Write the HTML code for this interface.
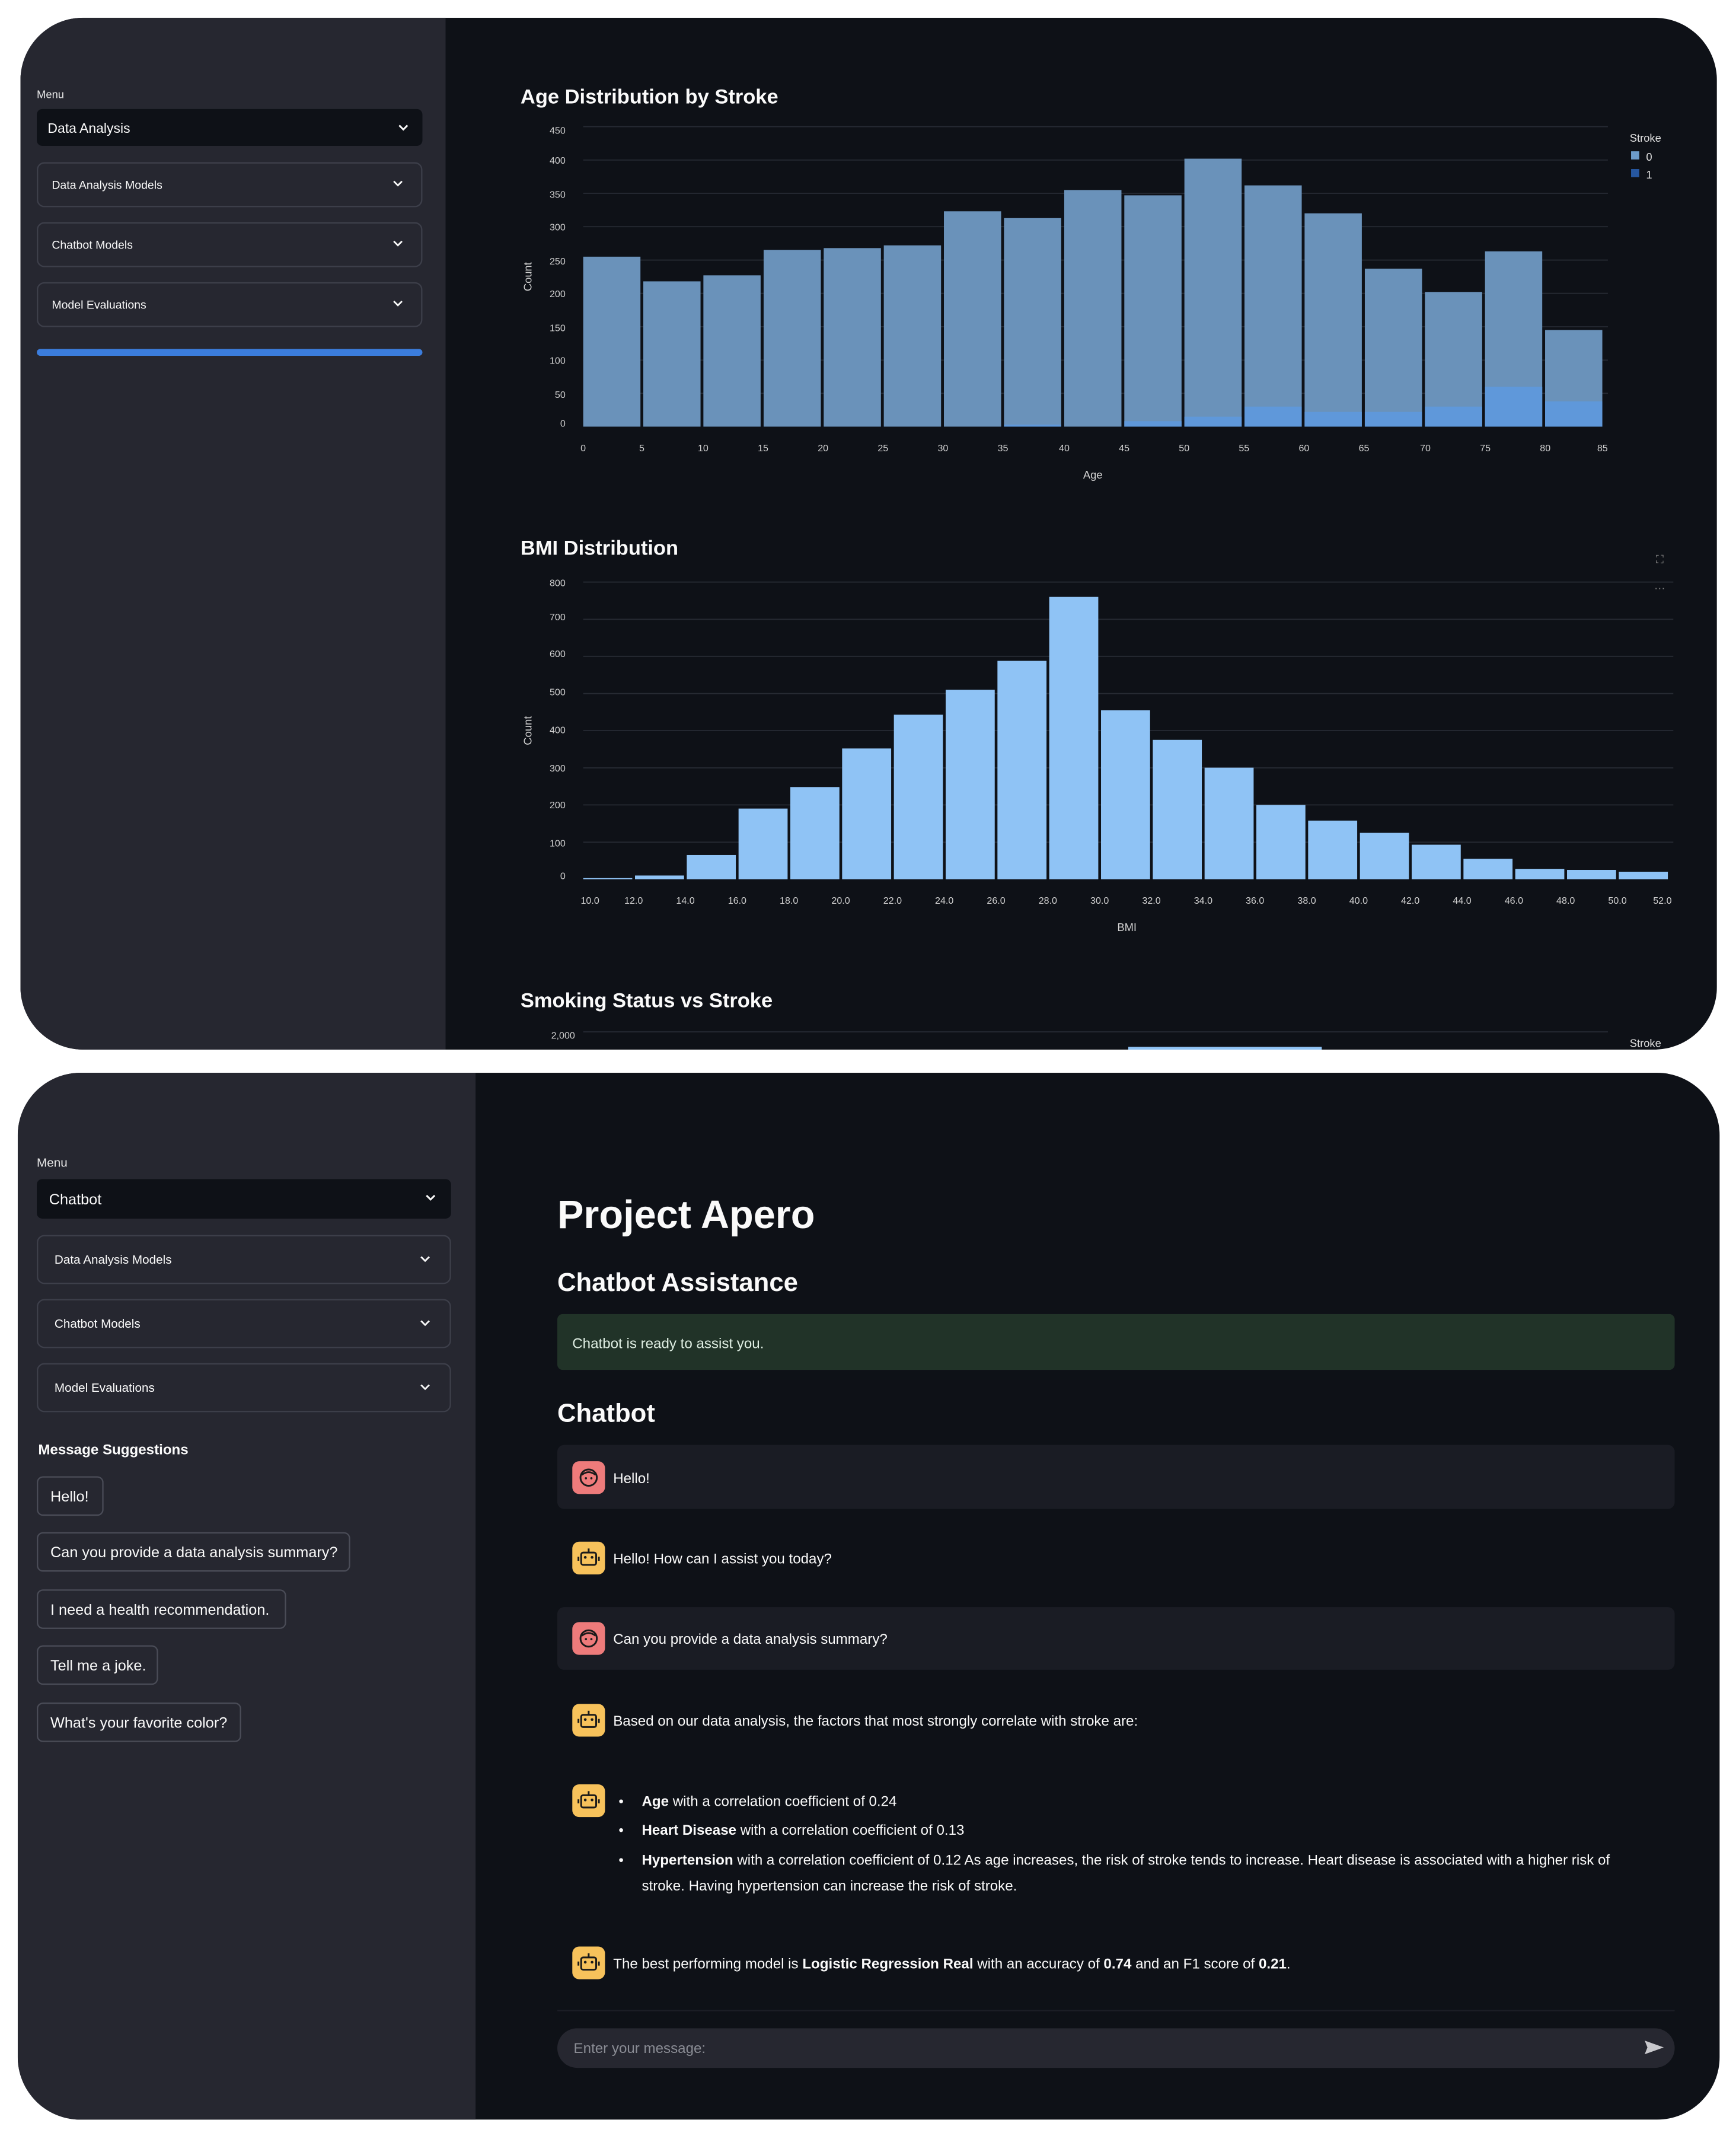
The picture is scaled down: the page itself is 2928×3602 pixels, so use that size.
<!DOCTYPE html>
<html><head><meta charset="utf-8"><style>
html,body{margin:0;padding:0;background:#fff;width:2928px;height:3602px;overflow:hidden}
svg{display:block}
text{font-family:"Liberation Sans",sans-serif}
</style></head><body>
<svg width="2928" height="3602" viewBox="0 0 1274 1567" preserveAspectRatio="none" xmlns="http://www.w3.org/2000/svg">
<defs>
<clipPath id="c1"><rect x="15" y="13" width="1245" height="757" rx="46"/></clipPath>
<clipPath id="c2"><rect x="13" y="787" width="1249" height="768" rx="46"/></clipPath>
</defs>
<rect width="1274" height="1567" fill="#fff"/>
<!-- PANEL 1 -->
<g clip-path="url(#c1)">
<rect x="15" y="13" width="1245" height="757" fill="#0e1117"/>
<rect x="15" y="13" width="312" height="757" fill="#262730"/>
<text x="27" y="72" font-size="8" fill="#e6e6e6">Menu</text>
<rect x="27" y="80" width="283" height="27" rx="4" fill="#0e1117"/>
<text x="35" y="97.5" font-size="10" fill="#fafafa">Data Analysis</text>
<path d="M293 92l3 3 3-3" stroke="#fafafa" stroke-width="1.3" fill="none"/>
<g fill="none" stroke="#3d3f4a"><rect x="27.5" y="119.5" width="282" height="32" rx="5"/><rect x="27.5" y="163.5" width="282" height="32" rx="5"/><rect x="27.5" y="207.5" width="282" height="32" rx="5"/></g>
<g font-size="8.5" fill="#fafafa"><text x="38" y="138.5">Data Analysis Models</text><text x="38" y="182.5">Chatbot Models</text><text x="38" y="226.5">Model Evaluations</text></g>
<g stroke="#fafafa" stroke-width="1.2" fill="none"><path d="M289 133l3 3 3-3"/><path d="M289 177l3 3 3-3"/><path d="M289 221l3 3 3-3"/></g>
<rect x="27" y="256" width="283" height="5" rx="2.5" fill="#3b7ddd"/>

<text x="382" y="76" font-size="15" font-weight="bold" fill="#fafafa">Age Distribution by Stroke</text>
<g stroke="#262a33" stroke-width="0.8">
<line x1="428" x2="1180" y1="92.9" y2="92.9"/><line x1="428" x2="1180" y1="117.4" y2="117.4"/><line x1="428" x2="1180" y1="141.8" y2="141.8"/><line x1="428" x2="1180" y1="166.3" y2="166.3"/><line x1="428" x2="1180" y1="190.8" y2="190.8"/><line x1="428" x2="1180" y1="215.2" y2="215.2"/><line x1="428" x2="1180" y1="239.7" y2="239.7"/><line x1="428" x2="1180" y1="264.2" y2="264.2"/><line x1="428" x2="1180" y1="288.5" y2="288.5"/></g>
<g font-size="7" fill="#d0d0d0" text-anchor="end">
<text x="415" y="98">450</text><text x="415" y="120">400</text><text x="415" y="145">350</text><text x="415" y="169">300</text><text x="415" y="194">250</text><text x="415" y="218">200</text><text x="415" y="243">150</text><text x="415" y="267">100</text><text x="415" y="292">50</text><text x="415" y="313">0</text></g>
<text x="390" y="203" font-size="8" fill="#d0d0d0" transform="rotate(-90 390 203)" text-anchor="middle">Count</text>
<g fill="#6a92ba">
<rect x="428" y="188.3" width="42" height="124.7"/><rect x="472.1" y="206.4" width="42" height="106.6"/><rect x="516.2" y="202" width="42" height="111"/><rect x="560.4" y="183.4" width="42" height="129.6"/><rect x="604.5" y="182" width="42" height="131"/><rect x="648.6" y="180" width="42" height="133"/><rect x="692.7" y="155" width="42" height="158"/><rect x="736.8" y="160" width="42" height="153"/><rect x="781" y="139.4" width="42" height="173.6"/><rect x="825.1" y="143.3" width="42" height="169.7"/><rect x="869.2" y="116.4" width="42" height="196.6"/><rect x="913.3" y="136" width="42" height="177"/><rect x="957.4" y="156.5" width="42" height="156.5"/><rect x="1001.6" y="197.1" width="42" height="115.9"/><rect x="1045.7" y="214.2" width="42" height="98.8"/><rect x="1089.8" y="184.4" width="42" height="128.6"/><rect x="1133.9" y="242.1" width="42" height="70.9"/></g>
<g fill="#5f98da">
<rect x="736.8" y="311.5" width="42" height="1.5"/><rect x="825.1" y="309" width="42" height="4"/><rect x="869.2" y="305.7" width="42" height="7.3"/><rect x="913.3" y="298.3" width="42" height="14.7"/><rect x="957.4" y="302.2" width="42" height="10.8"/><rect x="1001.6" y="302.2" width="42" height="10.8"/><rect x="1045.7" y="298.3" width="42" height="14.7"/><rect x="1089.8" y="283.7" width="42" height="29.3"/><rect x="1133.9" y="294.4" width="42" height="18.6"/></g>
<g font-size="7" fill="#d0d0d0" text-anchor="middle">
<text x="428" y="331">0</text><text x="471" y="331">5</text><text x="516" y="331">10</text><text x="560" y="331">15</text><text x="604" y="331">20</text><text x="648" y="331">25</text><text x="692" y="331">30</text><text x="736" y="331">35</text><text x="781" y="331">40</text><text x="825" y="331">45</text><text x="869" y="331">50</text><text x="913" y="331">55</text><text x="957" y="331">60</text><text x="1001" y="331">65</text><text x="1046" y="331">70</text><text x="1090" y="331">75</text><text x="1134" y="331">80</text><text x="1176" y="331">85</text></g>
<text x="802" y="351" font-size="8" fill="#d0d0d0" text-anchor="middle">Age</text>
<text x="1196" y="104" font-size="8" fill="#e0e0e0">Stroke</text>
<rect x="1197" y="111" width="6" height="6" fill="#6d9ccb"/><text x="1208" y="118" font-size="8" fill="#e0e0e0">0</text>
<rect x="1197" y="124" width="6" height="6" fill="#2657a0"/><text x="1208" y="131" font-size="8" fill="#e0e0e0">1</text>

<text x="382" y="407" font-size="15" font-weight="bold" fill="#fafafa">BMI Distribution</text>
<text x="1218" y="413" font-size="8" fill="#888" text-anchor="middle">⛶</text>
<text x="1218" y="434" font-size="8" fill="#888" text-anchor="middle">···</text>
<g stroke="#262a33" stroke-width="0.8">
<line x1="428" x2="1228" y1="427" y2="427"/><line x1="428" x2="1228" y1="454.3" y2="454.3"/><line x1="428" x2="1228" y1="481.5" y2="481.5"/><line x1="428" x2="1228" y1="508.8" y2="508.8"/><line x1="428" x2="1228" y1="536" y2="536"/><line x1="428" x2="1228" y1="563.3" y2="563.3"/><line x1="428" x2="1228" y1="590.5" y2="590.5"/><line x1="428" x2="1228" y1="617.8" y2="617.8"/></g>
<g font-size="7" fill="#d0d0d0" text-anchor="end">
<text x="415" y="430">800</text><text x="415" y="455">700</text><text x="415" y="482">600</text><text x="415" y="510">500</text><text x="415" y="538">400</text><text x="415" y="566">300</text><text x="415" y="593">200</text><text x="415" y="621">100</text><text x="415" y="645">0</text></g>
<text x="390" y="536" font-size="8" fill="#d0d0d0" transform="rotate(-90 390 536)" text-anchor="middle">Count</text>
<g fill="#8fc3f5">
<rect x="428" y="644.2" width="36" height="0.8"/><rect x="466" y="642.3" width="36" height="2.7"/><rect x="504" y="627.3" width="36" height="17.7"/><rect x="542" y="593.2" width="36" height="51.8"/><rect x="580" y="577.4" width="36" height="67.6"/><rect x="618" y="549.1" width="36" height="95.9"/><rect x="656" y="524.3" width="36" height="120.7"/><rect x="694" y="506" width="36" height="139"/><rect x="732" y="484.8" width="36" height="160.2"/><rect x="770" y="437.9" width="36" height="207.1"/><rect x="808" y="521" width="36" height="124"/><rect x="846" y="542.8" width="36" height="102.2"/><rect x="884" y="563.2" width="36" height="81.8"/><rect x="922" y="590.5" width="36" height="54.5"/><rect x="960" y="602" width="36" height="43"/><rect x="998" y="611" width="36" height="34"/><rect x="1036" y="619.7" width="36" height="25.3"/><rect x="1074" y="630" width="36" height="15"/><rect x="1112" y="637.4" width="36" height="7.6"/><rect x="1150" y="638.2" width="36" height="6.8"/><rect x="1188" y="639.5" width="36" height="5.5"/></g>
<g font-size="7" fill="#d0d0d0" text-anchor="middle">
<text x="433" y="663">10.0</text><text x="465" y="663">12.0</text><text x="503" y="663">14.0</text><text x="541" y="663">16.0</text><text x="579" y="663">18.0</text><text x="617" y="663">20.0</text><text x="655" y="663">22.0</text><text x="693" y="663">24.0</text><text x="731" y="663">26.0</text><text x="769" y="663">28.0</text><text x="807" y="663">30.0</text><text x="845" y="663">32.0</text><text x="883" y="663">34.0</text><text x="921" y="663">36.0</text><text x="959" y="663">38.0</text><text x="997" y="663">40.0</text><text x="1035" y="663">42.0</text><text x="1073" y="663">44.0</text><text x="1111" y="663">46.0</text><text x="1149" y="663">48.0</text><text x="1187" y="663">50.0</text><text x="1220" y="663">52.0</text></g>
<text x="827" y="683" font-size="8" fill="#d0d0d0" text-anchor="middle">BMI</text>

<text x="382" y="739" font-size="15" font-weight="bold" fill="#fafafa">Smoking Status vs Stroke</text>
<text x="422" y="762" font-size="7" fill="#d0d0d0" text-anchor="end">2,000</text>
<line x1="428" x2="1180" y1="757" y2="757" stroke="#262a33" stroke-width="0.8"/>
<rect x="828" y="768" width="142" height="4" fill="#8fc3f5"/>
<text x="1196" y="768" font-size="8" fill="#e0e0e0">Stroke</text>
</g>

<!-- PANEL 2 -->
<g clip-path="url(#c2)">
<rect x="13" y="787" width="1249" height="768" fill="#0e1117"/>
<rect x="13" y="787" width="336" height="768" fill="#262730"/>
<text x="27" y="856" font-size="9" fill="#e6e6e6">Menu</text>
<rect x="27" y="865" width="304" height="29" rx="4" fill="#0e1117"/>
<text x="36" y="883.5" font-size="11" fill="#fafafa">Chatbot</text>
<path d="M313 877l3 3 3-3" stroke="#fafafa" stroke-width="1.3" fill="none"/>
<g fill="none" stroke="#3d3f4a"><rect x="27.5" y="906.5" width="303" height="35" rx="5"/><rect x="27.5" y="953.5" width="303" height="35" rx="5"/><rect x="27.5" y="1000.5" width="303" height="35" rx="5"/></g>
<g font-size="9" fill="#fafafa"><text x="40" y="927">Data Analysis Models</text><text x="40" y="974">Chatbot Models</text><text x="40" y="1021">Model Evaluations</text></g>
<g stroke="#fafafa" stroke-width="1.2" fill="none"><path d="M309 922l3 3 3-3"/><path d="M309 969l3 3 3-3"/><path d="M309 1016l3 3 3-3"/></g>
<text x="28" y="1067" font-size="10.5" font-weight="bold" fill="#fafafa">Message Suggestions</text>
<g fill="none" stroke="#4a4c57"><rect x="27.5" y="1083.5" width="48" height="28" rx="4"/><rect x="27.5" y="1124.5" width="229" height="28" rx="4"/><rect x="27.5" y="1166.5" width="182" height="28" rx="4"/><rect x="27.5" y="1207.5" width="88" height="28" rx="4"/><rect x="27.5" y="1249.5" width="149" height="28" rx="4"/></g>
<g font-size="11" fill="#fafafa"><text x="37" y="1101.5">Hello!</text><text x="37" y="1142.5">Can you provide a data analysis summary?</text><text x="37" y="1184.5">I need a health recommendation.</text><text x="37" y="1225.5">Tell me a joke.</text><text x="37" y="1267.5">What's your favorite color?</text></g>

<text x="409" y="901" font-size="29" font-weight="bold" fill="#fafafa">Project Apero</text>
<text x="409" y="947" font-size="19" font-weight="bold" fill="#fafafa">Chatbot Assistance</text>
<rect x="409" y="964" width="820" height="41" rx="4" fill="#213328"/>
<text x="420" y="989" font-size="10.5" fill="#dfeee3">Chatbot is ready to assist you.</text>
<text x="409" y="1043" font-size="19" font-weight="bold" fill="#fafafa">Chatbot</text>
<rect x="409" y="1060" width="820" height="47" rx="5" fill="#1a1c24"/>
<rect x="409" y="1179" width="820" height="46" rx="5" fill="#1a1c24"/>
<g id="u"><rect x="420" y="1072" width="24" height="24" rx="5" fill="#ee7b7b"/><circle cx="432" cy="1084" r="6" fill="none" stroke="#1a1a1a" stroke-width="1.3"/><path d="M427 1082q5-4 10 0" stroke="#1a1a1a" stroke-width="1.2" fill="none"/><circle cx="430" cy="1084.5" r="0.8" fill="#1a1a1a"/><circle cx="434" cy="1084.5" r="0.8" fill="#1a1a1a"/></g>
<use href="#u" y="118"/>
<g id="b"><rect x="420" y="1131" width="24" height="24" rx="5" fill="#f7c25b"/><rect x="426.5" y="1139" width="11" height="9" rx="1.5" fill="none" stroke="#1a1a1a" stroke-width="1.3"/><line x1="432" y1="1136" x2="432" y2="1139" stroke="#1a1a1a" stroke-width="1.3"/><circle cx="429.5" cy="1142.5" r="1" fill="#1a1a1a"/><circle cx="434.5" cy="1142.5" r="1" fill="#1a1a1a"/><line x1="424.5" y1="1142" x2="424.5" y2="1145" stroke="#1a1a1a" stroke-width="1.3"/><line x1="439.5" y1="1142" x2="439.5" y2="1145" stroke="#1a1a1a" stroke-width="1.3"/></g>
<use href="#b" y="119"/><use href="#b" y="178"/><use href="#b" y="297"/>
<g font-size="10.5" fill="#fafafa">
<text x="450" y="1088">Hello!</text>
<text x="450" y="1147">Hello! How can I assist you today?</text>
<text x="450" y="1206">Can you provide a data analysis summary?</text>
<text x="450" y="1266">Based on our data analysis, the factors that most strongly correlate with stroke are:</text>
<text x="454" y="1325">•</text><text x="471" y="1325"><tspan font-weight="bold">Age</tspan> with a correlation coefficient of 0.24</text>
<text x="454" y="1346">•</text><text x="471" y="1346"><tspan font-weight="bold">Heart Disease</tspan> with a correlation coefficient of 0.13</text>
<text x="454" y="1368">•</text><text x="471" y="1368"><tspan font-weight="bold">Hypertension</tspan> with a correlation coefficient of 0.12 As age increases, the risk of stroke tends to increase. Heart disease is associated with a higher risk of</text>
<text x="471" y="1387">stroke. Having hypertension can increase the risk of stroke.</text>
<text x="450" y="1444">The best performing model is <tspan font-weight="bold">Logistic Regression Real</tspan> with an accuracy of <tspan font-weight="bold">0.74</tspan> and an F1 score of <tspan font-weight="bold">0.21</tspan>.</text>
</g>
<line x1="409" x2="1229" y1="1475" y2="1475" stroke="#1c1e26"/>
<rect x="409" y="1488" width="820" height="29" rx="14.5" fill="#262730"/>
<text x="421" y="1506" font-size="10.5" fill="#8a8c94">Enter your message:</text>
<path d="M1207 1497l14 5-14 5 2-5z" fill="#c8c8cc"/>
</g>
</svg>
</body></html>
